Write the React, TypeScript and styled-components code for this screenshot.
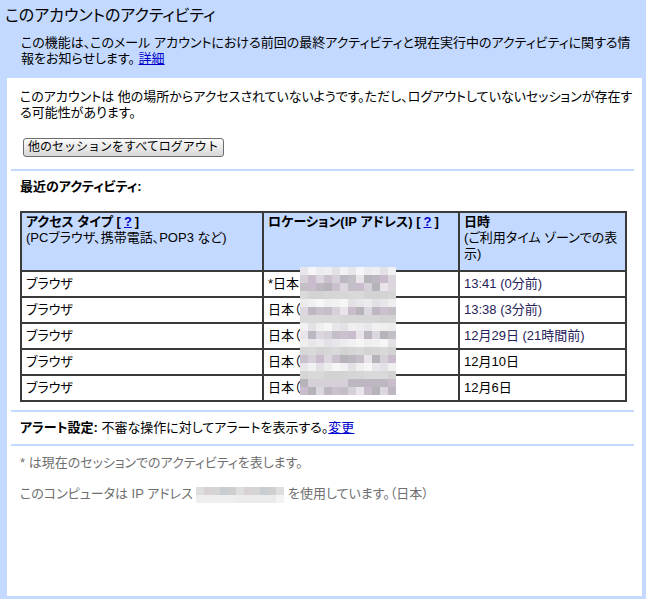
import React from "react";
import styled, { createGlobalStyle } from "styled-components";

const GlobalStyle = createGlobalStyle`
  body {
    margin: 0;
    font-family: "Liberation Sans", "Noto Sans CJK JP", sans-serif;
    font-feature-settings: "palt";
    font-size: 13px;
    color: #000;
  }
`;

const Page = styled.div`
  width: 646px;
  height: 599px;
  box-sizing: border-box;
  background-color: #c3d9ff;
  display: flex;
  flex-direction: column;
`;

const Header = styled.div`
  padding: 6px 10px 11px 5px;
`;

const Title = styled.h1`
  margin: 0;
  font-size: 16px;
  font-weight: normal;
  line-height: 20px;
`;

const Lead = styled.p`
  margin: 9px 0 0 16px;
  line-height: 16px;
  white-space: nowrap;
`;

const Body = styled.div`
  flex: 1;
  background-color: #fff;
  margin: 0 4px 3px 7px;
  display: flex;
  flex-direction: column;
`;

const Section = styled.div<{ top: number }>`
  padding: ${(props) => props.top}px 13px 0 13px;
`;

const Text = styled.p`
  margin: 0;
  line-height: 16px;
  white-space: nowrap;
`;

const Button = styled.button`
  margin: 17px 0 0 3px;
  height: 19px;
  padding: 0 4px;
  font-family: inherit;
  font-size: 12px;
  line-height: 15px;
  color: #000;
  border: 1px solid #6e6e6e;
  border-radius: 3px;
  background: linear-gradient(#fbfbfb, #e6e6e6 60%, #d6d6d6);
  display: block;
  cursor: pointer;
`;

const Divider = styled.div<{ top: number }>`
  height: 2px;
  background-color: #c3d9ff;
  margin: ${(props) => props.top}px 8px 0 4px;
`;

const Heading = styled.h2`
  margin: 0;
  font-size: 13px;
  font-weight: bold;
  line-height: 16px;
`;

const TableWrap = styled.div`
  position: relative;
  margin-top: 16px;
  width: 605px;
`;

const Table = styled.table`
  width: 605px;
  table-layout: fixed;
  border-collapse: collapse;
  border: 2px solid #3a3a3a;
`;

const HeadCell = styled.th`
  background-color: #c3d9ff;
  border: 2px solid #3a3a3a;
  text-align: left;
  vertical-align: top;
  font-weight: normal;
  padding: 1px 3px 6px 4px;
  line-height: 16px;
  height: 50px;
  white-space: nowrap;
`;

const Cell = styled.td<{ recent?: boolean }>`
  border: 2px solid #3a3a3a;
  padding: 4px 3px 4px 4px;
  line-height: 16px;
  height: 16px;
  white-space: nowrap;
  color: ${(props) => (props.recent ? "#25215a" : "#000")};
`;

const Strong = styled.b`
  font-weight: bold;
`;

const Link = styled.a`
  color: #0000cc;
  text-decoration: underline;
  cursor: pointer;
`;

const HelpLink = styled(Link)`
  font-weight: bold;
  padding: 0 3px;
`;

const MosaicBox = styled.span<{ cols: number; cell: number }>`
  display: inline-grid;
  grid-template-columns: repeat(${(props) => props.cols}, ${(props) => props.cell}px);
  grid-auto-rows: ${(props) => props.cell}px;
  vertical-align: middle;
`;

const Overlay = styled.div`
  position: absolute;
  left: 280px;
  top: 56px;
`;

const Note = styled.p<{ top: number }>`
  margin: ${(props) => props.top}px 0 0 0;
  line-height: 16px;
  color: #6f6f6f;
  white-space: nowrap;
`;

const dark = ["#cbc1ce", "#bdb7c1", "#dcd6de", "#b6b3b9", "#c9bccd", "#e8e4ea", "#d6d0d8", "#c4bfc6"];
const light = ["#f1f0f2", "#e8e6ea", "#f6f6f6", "#ecebee", "#efefef", "#e3e1e5"];
const gray = ["#d6d6d6", "#d9d9d9", "#d3d3d3"];

const pick = (list: string[], n: number) => list[Math.abs(n * 7919 + 13) % list.length];

const Mosaic = ({ rows, cols, kind }: { rows: number; cols: number; kind: (r: number) => string[] }) => {
  const cells = [];
  for (let r = 0; r < rows; r++) {
    const palette = kind(r);
    for (let c = 0; c < cols; c++) {
      cells.push(
        <span key={`${r}-${c}`} style={{ backgroundColor: pick(palette, r * 31 + c * 17 + ((r * c) % 5)) }} />
      );
    }
  }
  return (
    <MosaicBox cols={cols} cell={8}>
      {cells}
    </MosaicBox>
  );
};

// rows of the table blur, 8px each, starting at table y=56
const tableKind = (r: number) => {
  const y = 56 + r * 8 + 4;
  const texts = [72, 98, 124, 150, 176];
  const lines = [85, 111, 137, 163];
  if (texts.some((t) => Math.abs(t - y) <= 4)) return dark;
  if (lines.some((l) => Math.abs(l - y) <= 3)) return gray;
  return light;
};

const footKind = (r: number) => (r === 0 ? ["#cfcfcf", "#d8d2d2", "#c9cdd2", "#dedede", "#d4d4d4"] : ["#eeeeee", "#f3f3f3", "#ebebeb"]);

const rows = [
  { type: "ブラウザ", loc: "*日本（", time: "13:41 (0分前)", recent: true },
  { type: "ブラウザ", loc: "日本（", time: "13:38 (3分前)", recent: true },
  { type: "ブラウザ", loc: "日本（", time: "12月29日 (21時間前)", recent: true },
  { type: "ブラウザ", loc: "日本（", time: "12月10日", recent: false },
  { type: "ブラウザ", loc: "日本（", time: "12月6日", recent: false },
];

const App = () => {
  return (
    <Page>
      <GlobalStyle />
      <Header>
        <Title>このアカウントのアクティビティ</Title>
        <Lead>
          この機能は、このメール アカウントにおける前回の最終アクティビティと現在実行中のアクティビティに関する情
          <br />
          報をお知らせします。 <Link>詳細</Link>
        </Lead>
      </Header>
      <Body>
        <Section top={11}>
          <Text>
            このアカウントは 他の場所からアクセスされていないようです。ただし、ログアウトしていないセッションが存在す
            <br />
            る可能性があります。
          </Text>
          <Button>他のセッションをすべてログアウト</Button>
        </Section>
        <Divider top={12} />
        <Section top={8}>
          <Heading>最近のアクティビティ:</Heading>
          <TableWrap>
            <Table>
              <colgroup>
                <col style={{ width: 242 }} />
                <col style={{ width: 196 }} />
                <col style={{ width: 167 }} />
              </colgroup>
              <thead>
                <tr>
                  <HeadCell>
                    <Strong>
                      アクセス タイプ [<HelpLink>?</HelpLink>]
                    </Strong>
                    <br />
                    (PCブラウザ、携帯電話、POP3 など)
                  </HeadCell>
                  <HeadCell>
                    <Strong>
                      ロケーション(IP アドレス) [<HelpLink>?</HelpLink>]
                    </Strong>
                  </HeadCell>
                  <HeadCell>
                    <Strong>日時</Strong>
                    <br />
                    (ご利用タイム ゾーンでの表
                    <br />
                    示)
                  </HeadCell>
                </tr>
              </thead>
              <tbody>
                {rows.map((row, i) => (
                  <tr key={i}>
                    <Cell>{row.type}</Cell>
                    <Cell>{row.loc}</Cell>
                    <Cell recent={row.recent}>{row.time}</Cell>
                  </tr>
                ))}
              </tbody>
            </Table>
            <Overlay>
              <Mosaic rows={16} cols={12} kind={tableKind} />
            </Overlay>
          </TableWrap>
        </Section>
        <Divider top={8} />
        <Section top={8}>
          <Text>
            <Strong>アラート設定:</Strong> 不審な操作に対してアラートを表示する。<Link>変更</Link>
          </Text>
        </Section>
        <Divider top={8} />
        <Section top={0}>
          <Note top={9}>* は現在のセッションでのアクティビティを表します。</Note>
          <Note top={15}>
            このコンピュータは IP アドレス <Mosaic rows={2} cols={11} kind={footKind} /> を使用しています。（日本）
          </Note>
        </Section>
      </Body>
    </Page>
  );
};

export default App;
